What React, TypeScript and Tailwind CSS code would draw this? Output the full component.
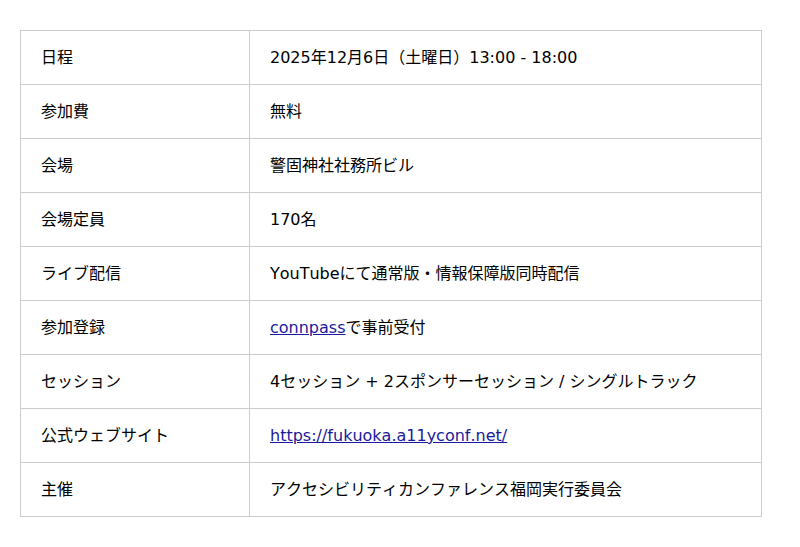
const rows: { label: string; value: React.ReactNode }[] = [
  { label: '日程', value: '2025年12月6日（土曜日）13:00 - 18:00' },
  { label: '参加費', value: '無料' },
  { label: '会場', value: '警固神社社務所ビル' },
  { label: '会場定員', value: '170名' },
  { label: 'ライブ配信', value: 'YouTubeにて通常版・情報保障版同時配信' },
  {
    label: '参加登録',
    value: (
      <>
        <a href="#" className="text-[#1a1a9c] underline">connpass</a>で事前受付
      </>
    ),
  },
  { label: 'セッション', value: '4セッション + 2スポンサーセッション / シングルトラック' },
  {
    label: '公式ウェブサイト',
    value: (
      <a href="#" className="text-[#1a1a9c] underline">https://fukuoka.a11yconf.net/</a>
    ),
  },
  { label: '主催', value: 'アクセシビリティカンファレンス福岡実行委員会' },
]

export default function App() {
  return (
    <div
      className="min-h-[547px] bg-white pt-[30px] pl-[20px] text-black [font-kerning:none]"
      style={{ fontFamily: '"DejaVu Sans", "Noto Sans CJK JP", sans-serif' }}
    >
      <table className="w-[742px] border-collapse text-[16px]">
        <tbody>
          {rows.map((row) => (
            <tr key={row.label} className="h-[54px]">
              <th className="w-[229px] border border-[#cccccc] px-5 text-left font-normal">
                {row.label}
              </th>
              <td className="border border-[#cccccc] px-5">{row.value}</td>
            </tr>
          ))}
        </tbody>
      </table>
    </div>
  )
}
